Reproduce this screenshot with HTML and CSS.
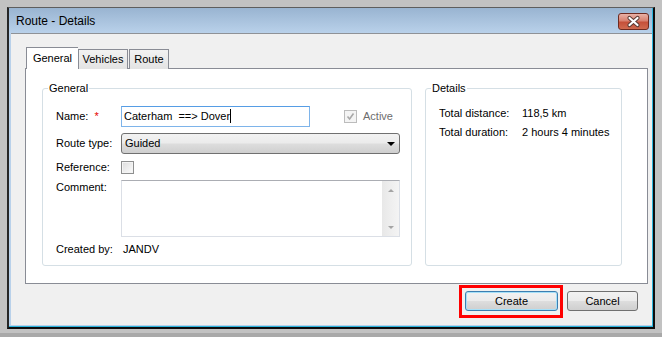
FILE: index.html
```html
<!DOCTYPE html>
<html lang="en">
<head>
    <meta charset="utf-8">
    <title>Route - Details</title>
    <link rel="stylesheet" href="styles.css">
</head>
<body>
    <div class="desktop">
        <div class="window">
            <div class="titlebar">
                <span class="title">Route - Details</span>
                <button class="close-btn" aria-label="Close">
                    <svg width="31" height="17" viewBox="0 0 31 17">
                        <path d="M11.5 5 L19.5 12 M19.5 5 L11.5 12" stroke="#5a3a34" stroke-width="4.2" stroke-linecap="round"/>
                        <path d="M11.5 5 L19.5 12 M19.5 5 L11.5 12" stroke="#ffffff" stroke-width="2.2" stroke-linecap="round"/>
                    </svg>
                </button>
            </div>

            <div class="client">
                <div class="tabs">
                    <div class="tab tab-active">General</div>
                    <div class="tab">Vehicles</div>
                    <div class="tab">Route</div>
                </div>

                <div class="tab-page">
                    <fieldset class="group group-general">
                        <legend>General</legend>
                        <div class="form-grid">
                            <label class="field-label">Name:<span class="required">*</span></label>
                            <div class="name-line">
                                <div class="textbox focused">Caterham  ==&gt; Dover<span class="caret"></span></div>
                                <div class="active-check">
                                    <span class="checkbox disabled">
                                        <svg width="9" height="9" viewBox="0 0 9 9"><path d="M1.5 4.5 L3.6 7 L7.5 1.5" fill="none" stroke="#a8a8a8" stroke-width="1.6"/></svg>
                                    </span>
                                    <span class="active-text">Active</span>
                                </div>
                            </div>

                            <label class="field-label">Route type:</label>
                            <div class="combo">
                                <span>Guided</span>
                                <span class="combo-arrow"></span>
                            </div>

                            <label class="field-label tall">Reference:</label>
                            <div><span class="checkbox"></span></div>

                            <label class="field-label top">Comment:</label>
                            <div class="memo">
                                <div class="memo-text"></div>
                                <div class="scrollbar">
                                    <span class="arrow-up"></span>
                                    <span class="arrow-down"></span>
                                </div>
                            </div>

                            <label class="field-label">Created by:</label>
                            <div class="created-by">JANDV</div>
                        </div>
                    </fieldset>

                    <fieldset class="group group-details">
                        <legend>Details</legend>
                        <div class="details-grid">
                            <span>Total distance:</span>
                            <span>118,5 km</span>
                            <span>Total duration:</span>
                            <span>2 hours 4 minutes</span>
                        </div>
                    </fieldset>
                </div>

                <div class="actions">
                    <span class="highlight">
                        <button class="btn btn-default">Create</button>
                    </span>
                    <button class="btn btn-cancel">Cancel</button>
                </div>
            </div>
        </div>
    </div>
</body>
</html>
```

FILE: styles.css
```css
body {
    margin: 0;
    background: #a9a9a9;
    font-family: "Liberation Sans", Arial, sans-serif;
    font-size: 11px;
    color: #000;
    overflow: hidden;
}
.desktop {
    height: 333px;
    padding: 7px 0 0 7px;
    box-sizing: border-box;
    background: #c2c2c2;
}

/* window frame */
.window {
    width: 648px;
    height: 322px;
    box-sizing: border-box;
    border: 2px solid #0d0d0d;
    border-top: 1px solid #5e5e5e;
    border-left-color: #262626;
    background: #b9d1ea;
    box-shadow: inset -1px -1px 0 #2bb4dc;
    display: flex;
    flex-direction: column;
}
.titlebar {
    height: 25px;
    flex: none;
    margin-right: 1px;
    padding: 0 3px 0 7px;
    display: flex;
    align-items: flex-start;
    justify-content: space-between;
    background: linear-gradient(#99b4d1, #b9d1ea);
}
.title {
    margin-top: 6px;
    line-height: 15px;
    font-size: 12px;
    color: #000;
}
.close-btn {
    margin-top: 5px;
    width: 31px;
    height: 17px;
    padding: 0;
    border: 1px solid #6e2a20;
    border-radius: 3px;
    background: linear-gradient(#e9b1a6 0%, #d88170 45%, #c5503a 55%, #cf6a4f 100%);
    display: flex;
    align-items: center;
    justify-content: center;
    box-sizing: border-box;
}
.close-btn svg {
    display: block;
    margin: -1px;
}

/* client area */
.client {
    flex: 1;
    margin: 0 1px 2px 2px;
    border-top: 1px solid #8f9297;
    background: #f0f0f0;
    padding: 13px 4px 0 14px;
}
.tabs {
    display: flex;
    align-items: flex-end;
    margin-left: 1px;
    margin-bottom: -1px;
    position: relative;
    z-index: 1;
}
.tab {
    height: 20px;
    box-sizing: border-box;
    border: 1px solid #898c95;
    border-bottom: none;
    background: linear-gradient(#f2f2f2, #e3e3e3);
    line-height: 19px;
    text-align: center;
}
.tab:nth-child(2) {
    width: 50px;
}
.tab:nth-child(3) {
    width: 40px;
    margin-left: 1px;
}
.tab-active {
    width: 52px;
    height: 22px;
    line-height: 21px;
    background: #fff;
    border-right: none;
}
.tab-page {
    height: 216px;
    box-sizing: border-box;
    border: 1px solid #898c95;
    background: #fff;
    display: flex;
    gap: 13px;
    padding: 13px 25px 17px 16px;
}

/* group boxes */
.group {
    margin: 0;
    min-width: 0;
    border: 1px solid #d5dfe5;
    border-radius: 3px;
    padding: 0 12px 0 13px;
    box-sizing: border-box;
}
.group legend {
    padding: 0 1px;
    margin-left: -8px;
    line-height: 13px;
}
.group-general {
    width: 370px;
    flex: none;
}
.group-details {
    flex: 1;
    padding-right: 2px;
}

.form-grid {
    margin-top: 11px;
    display: grid;
    grid-template-columns: 65px 279px;
    row-gap: 6px;
    align-items: center;
    line-height: 13px;
}
.field-label.tall {
    line-height: 14px;
}
.field-label.top {
    align-self: start;
    padding-top: 1px;
}
.required {
    color: #e60000;
    margin-left: 6px;
}
.name-line {
    display: flex;
    align-items: center;
}
.textbox {
    width: 189px;
    height: 21px;
    box-sizing: border-box;
    border: 1px solid #c5d5e6;
    border-top-color: #3d7bad;
    background: #fff;
    padding: 0 2px;
    line-height: 19px;
    white-space: pre;
}
.textbox.focused {
    border-color: #7eb4ea;
    border-top-color: #569de5;
}
.caret {
    display: inline-block;
    width: 1px;
    height: 14px;
    background: #000;
    vertical-align: -3px;
}
.active-check {
    margin-left: 34px;
    display: flex;
    align-items: center;
    gap: 6px;
}
.active-text {
    color: #6d6d6d;
}
.checkbox {
    width: 13px;
    height: 13px;
    box-sizing: border-box;
    border: 1px solid #8e8f8f;
    background: linear-gradient(135deg, #dcdcdc, #fcfcfc);
    box-shadow: inset 0 0 0 1px #f4f4f4;
    display: flex;
    align-items: center;
    justify-content: center;
}
.checkbox.disabled {
    border-color: #bcbcbc;
    background: #f4f4f4;
}
.combo {
    height: 21px;
    box-sizing: border-box;
    border: 1px solid #707070;
    border-radius: 3px;
    background: linear-gradient(#f2f2f2 0%, #ebebeb 48%, #dddddd 52%, #cfcfcf 100%);
    padding: 0 4px 0 3px;
    display: flex;
    align-items: center;
    justify-content: space-between;
}
.combo-arrow {
    width: 0;
    height: 0;
    border-left: 4px solid transparent;
    border-right: 4px solid transparent;
    border-top: 4px solid #000;
}
.memo {
    height: 57px;
    box-sizing: border-box;
    border: 1px solid #dbdfe6;
    border-top-color: #abadb3;
    background: #fff;
    display: flex;
}
.memo-text {
    flex: 1;
}
.scrollbar {
    width: 17px;
    background: linear-gradient(90deg, #e8e8e8, #f4f4f4);
    display: flex;
    flex-direction: column;
    justify-content: space-between;
    align-items: center;
    padding: 8px 0 7px;
}
.arrow-up {
    border-left: 3px solid transparent;
    border-right: 3px solid transparent;
    border-bottom: 3px solid #a4a4a4;
}
.arrow-down {
    border-left: 3px solid transparent;
    border-right: 3px solid transparent;
    border-top: 3px solid #a4a4a4;
}
.created-by {
    padding-left: 2px;
}

.details-grid {
    margin-top: 12px;
    display: grid;
    grid-template-columns: 83px auto;
    row-gap: 6px;
    line-height: 13px;
    white-space: nowrap;
}

/* buttons */
.actions {
    display: flex;
    align-items: flex-start;
    justify-content: flex-end;
    gap: 4px;
    margin-top: 1px;
    padding-right: 10px;
}
.highlight {
    display: block;
    border: 3px solid #ff0000;
    padding: 3px 2px 4px 3px;
}
.btn {
    display: block;
    height: 20px;
    padding: 0;
    font-family: "Liberation Sans", Arial, sans-serif;
    font-size: 11px;
    color: #000;
    border: 1px solid #707070;
    border-radius: 3px;
    background: linear-gradient(#f2f2f2 0%, #ebebeb 48%, #dddddd 52%, #cfcfcf 100%);
}
.btn-default {
    width: 93px;
    border-color: #3c7fb1;
    box-shadow: inset 0 0 0 1px #a6e0f8;
}
.btn-cancel {
    width: 71px;
    margin-top: 6px;
}
```
